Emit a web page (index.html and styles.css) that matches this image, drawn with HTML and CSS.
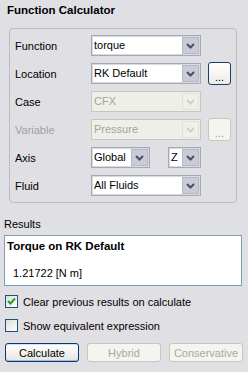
FILE: index.html
```html
<!doctype html>
<html lang="en">
<head>
    <meta charset="UTF-8">
    <title>Function Calculator</title>
    <link rel="stylesheet" href="styles.css">
</head>
<body>
    <div class="panel">
        <h2 class="title">Function Calculator</h2>

        <div class="group">
            <div class="row">
                <span class="label">Function</span>
                <div class="combo">
                    <span class="value">torque</span>
                    <span class="arrow"><svg width="9" height="6" viewBox="0 0 9 6"><path d="M1 1l3.5 3.5L8 1" fill="none" stroke="currentColor" stroke-width="2"/></svg></span>
                </div>
            </div>
            <div class="row">
                <span class="label">Location</span>
                <div class="combo">
                    <span class="value">RK Default</span>
                    <span class="arrow"><svg width="9" height="6" viewBox="0 0 9 6"><path d="M1 1l3.5 3.5L8 1" fill="none" stroke="currentColor" stroke-width="2"/></svg></span>
                </div>
                <button class="dots">...</button>
            </div>
            <div class="row">
                <span class="label">Case</span>
                <div class="combo disabled">
                    <span class="value">CFX</span>
                    <span class="arrow"><svg width="9" height="6" viewBox="0 0 9 6"><path d="M1 1l3.5 3.5L8 1" fill="none" stroke="currentColor" stroke-width="2"/></svg></span>
                </div>
            </div>
            <div class="row">
                <span class="label muted">Variable</span>
                <div class="combo disabled">
                    <span class="value">Pressure</span>
                    <span class="arrow"><svg width="9" height="6" viewBox="0 0 9 6"><path d="M1 1l3.5 3.5L8 1" fill="none" stroke="currentColor" stroke-width="2"/></svg></span>
                </div>
                <button class="dots" disabled>...</button>
            </div>
            <div class="row">
                <span class="label">Axis</span>
                <div class="combo axis">
                    <span class="value">Global</span>
                    <span class="arrow"><svg width="9" height="6" viewBox="0 0 9 6"><path d="M1 1l3.5 3.5L8 1" fill="none" stroke="currentColor" stroke-width="2"/></svg></span>
                </div>
                <div class="combo dir">
                    <span class="value">Z</span>
                    <span class="arrow"><svg width="9" height="6" viewBox="0 0 9 6"><path d="M1 1l3.5 3.5L8 1" fill="none" stroke="currentColor" stroke-width="2"/></svg></span>
                </div>
            </div>
            <div class="row">
                <span class="label">Fluid</span>
                <div class="combo">
                    <span class="value">All Fluids</span>
                    <span class="arrow"><svg width="9" height="6" viewBox="0 0 9 6"><path d="M1 1l3.5 3.5L8 1" fill="none" stroke="currentColor" stroke-width="2"/></svg></span>
                </div>
            </div>
        </div>

        <div class="results-label">Results</div>
        <div class="results">
            <div class="results-title">Torque on RK Default</div>
            <div class="results-value">1.21722 [N m]</div>
        </div>

        <label class="check">
            <span class="box checked"><svg width="9" height="9" viewBox="0 0 9 9"><path d="M1 4l2.5 2.5L8 1.5" fill="none" stroke="#21a121" stroke-width="2"/></svg></span>
            Clear previous results on calculate
        </label>
        <label class="check">
            <span class="box"></span>
            Show equivalent expression
        </label>

        <div class="actions">
            <button class="btn primary">Calculate</button>
            <button class="btn" disabled>Hybrid</button>
            <button class="btn" disabled>Conservative</button>
        </div>
    </div>
</body>
</html>
```

FILE: styles.css
```css
* {
    margin: 0;
    padding: 0;
    box-sizing: border-box;
}
body {
    font-family: 'Liberation Sans', Arial, sans-serif;
    font-size: 11px;
    color: #000;
    background-color: #e0dfe3;
    width: 248px;
    height: 372px;
    overflow: hidden;
}
.panel {
    padding: 3px 0 0 0;
}
.title {
    font-size: 11.5px;
    font-weight: bold;
    line-height: 14px;
    margin-left: 7px;
}
.group {
    margin: 11px 0 0 9px;
    width: 228px;
    height: 175px;
    border: 1px solid #bdbcc2;
    border-radius: 4px;
    padding: 6px 0 0 5px;
    display: flex;
    flex-direction: column;
    gap: 7px;
}
.row {
    display: flex;
    align-items: center;
    height: 21px;
}
.label {
    width: 76px;
}
.muted {
    color: #a0a0a0;
}
.combo {
    display: flex;
    align-items: stretch;
    width: 110px;
    height: 21px;
    background: #fff;
    border: 1px solid #a5a9b1;
    box-shadow: inset 0 0 0 1px #d9dade;
}
.combo .value {
    flex: 1;
    padding-left: 2px;
    line-height: 19px;
}
.combo .arrow {
    width: 17px;
    margin: 1px;
    display: flex;
    align-items: center;
    justify-content: center;
    background: #c9ccd8;
    border: 1px solid #b5b9c8;
    color: #4a4e5e;
}
.combo.disabled {
    background: #efefea;
    border-color: #c9c7ba;
    box-shadow: none;
    color: #a6a496;
}
.combo.disabled .arrow {
    background: #f0f0ea;
    border-color: #e2e1da;
    color: #d2d1c8;
}
.combo.axis {
    width: 59px;
}
.combo.dir {
    width: 33px;
    margin-left: 18px;
}
.dots {
    width: 23px;
    height: 23px;
    margin-left: 7px;
    font-family: inherit;
    font-size: 11px;
    line-height: 23px;
    padding-top: 3px;
    border: 1px solid #1d3b6e;
    border-radius: 3px;
    background: linear-gradient(#ffffff, #ecebe6);
    color: #000;
}
.dots:disabled {
    border-color: #c9c7ba;
    background: #f4f4f0;
    color: #a0a0a0;
}
.results-label {
    margin: 14px 0 0 4px;
    line-height: 14px;
}
.results {
    margin: 4px 0 0 4px;
    width: 238px;
    height: 51px;
    background: #fff;
    border: 1px solid #7f9db9;
    padding: 3px 0 0 2px;
}
.results-title {
    font-weight: bold;
    font-size: 11.5px;
    line-height: 15px;
}
.results-value {
    margin: 12px 0 0 6px;
    line-height: 14px;
}
.check {
    display: flex;
    align-items: center;
    gap: 5px;
    margin-left: 5px;
    height: 13px;
}
.results + .check {
    margin-top: 9px;
}
.check + .check {
    margin-top: 11px;
}
.box {
    width: 13px;
    height: 13px;
    border: 1px solid #1c5180;
    background: linear-gradient(135deg, #dcdcd7, #ffffff);
    display: flex;
    align-items: center;
    justify-content: center;
}
.actions {
    display: flex;
    gap: 8px;
    margin: 11px 0 0 5px;
}
.btn {
    width: 74px;
    height: 19px;
    font-family: inherit;
    font-size: 11px;
    border: 1px solid #003c74;
    border-radius: 3px;
    background: linear-gradient(#ffffff, #e6e5e0);
    color: #000;
}
.btn.primary {
    box-shadow: inset 0 -1px 0 #a8b8d8, inset 0 1px 0 #cfe0f8;
}
.btn:disabled {
    border-color: #c9c7ba;
    background: #f4f4f0;
    color: #aca899;
}
```
